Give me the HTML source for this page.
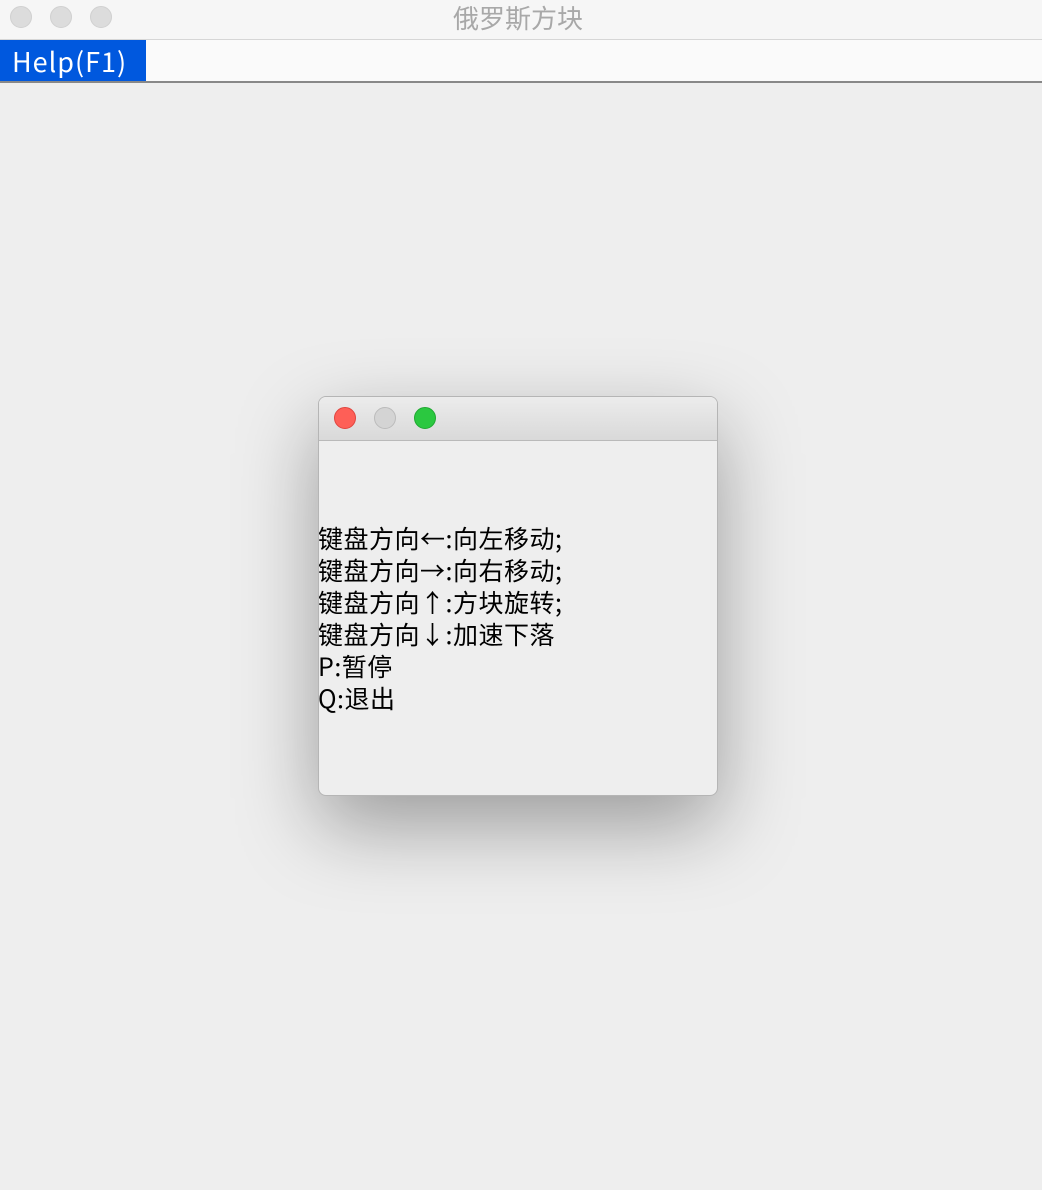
<!DOCTYPE html>
<html><head><meta charset="utf-8"><style>
body{margin:0;width:1042px;height:1190px;background:#eeeeee;position:relative;overflow:hidden;font-family:"Liberation Sans","Noto Sans CJK SC",sans-serif}
.tb{position:absolute;left:0;top:0;width:1042px;height:39px;background:#f6f6f6;border-bottom:1px solid #d6d6d6}
.c{position:absolute;width:22px;height:22px;border-radius:50%;background:#dcdcdc;border:1px solid #d0d0d0;box-sizing:border-box}
.title{position:absolute;left:0;width:1036px;text-align:center;top:3px;font-size:26px;color:#a8a8a8;font-family:"Noto Sans CJK SC",sans-serif;line-height:30px}
.mb{position:absolute;left:0;top:40px;width:1042px;height:41px;background:#fafafa;border-bottom:2px solid #888}
.help{position:absolute;left:0;top:0;width:146px;height:41px;background:#0058de;color:#fff;font-size:27px;letter-spacing:1px;line-height:42px;padding-left:12px;box-sizing:border-box;font-family:"Noto Sans CJK SC",sans-serif}
.dlg{position:absolute;left:318px;top:396px;width:400px;height:400px;border-radius:8px;background:#eeeeee;box-shadow:0 30px 80px rgba(0,0,0,.35);border:1px solid #b5b5b5;box-sizing:border-box;overflow:hidden}
.dt{height:43px;background:linear-gradient(#ececec,#d9d9d9);border-bottom:1px solid #b9b9b9}
.txt{position:absolute;left:-1px;top:125px;font-size:25px;letter-spacing:0.5px;line-height:32px;color:#000;font-family:"Noto Sans CJK SC",sans-serif;white-space:pre}
</style></head><body>
<div class="tb">
<div class="c" style="left:10px;top:6px"></div><div class="c" style="left:50px;top:6px"></div><div class="c" style="left:90px;top:6px"></div>
<div class="title">俄罗斯方块</div></div>
<div class="mb"><div class="help">Help(F1)</div></div>
<div class="dlg"><div class="dt">
<div class="c" style="left:15px;top:10px;background:#fe5f57;border-color:#e0443e"></div>
<div class="c" style="left:55px;top:10px;background:#d4d4d4;border-color:#bbb"></div>
<div class="c" style="left:95px;top:10px;background:#2bc840;border-color:#1fa831"></div>
</div>
<div class="txt">键盘方向←:向左移动;
键盘方向→:向右移动;
键盘方向↑:方块旋转;
键盘方向↓:加速下落
P:暂停
Q:退出</div></div>
</body></html>
